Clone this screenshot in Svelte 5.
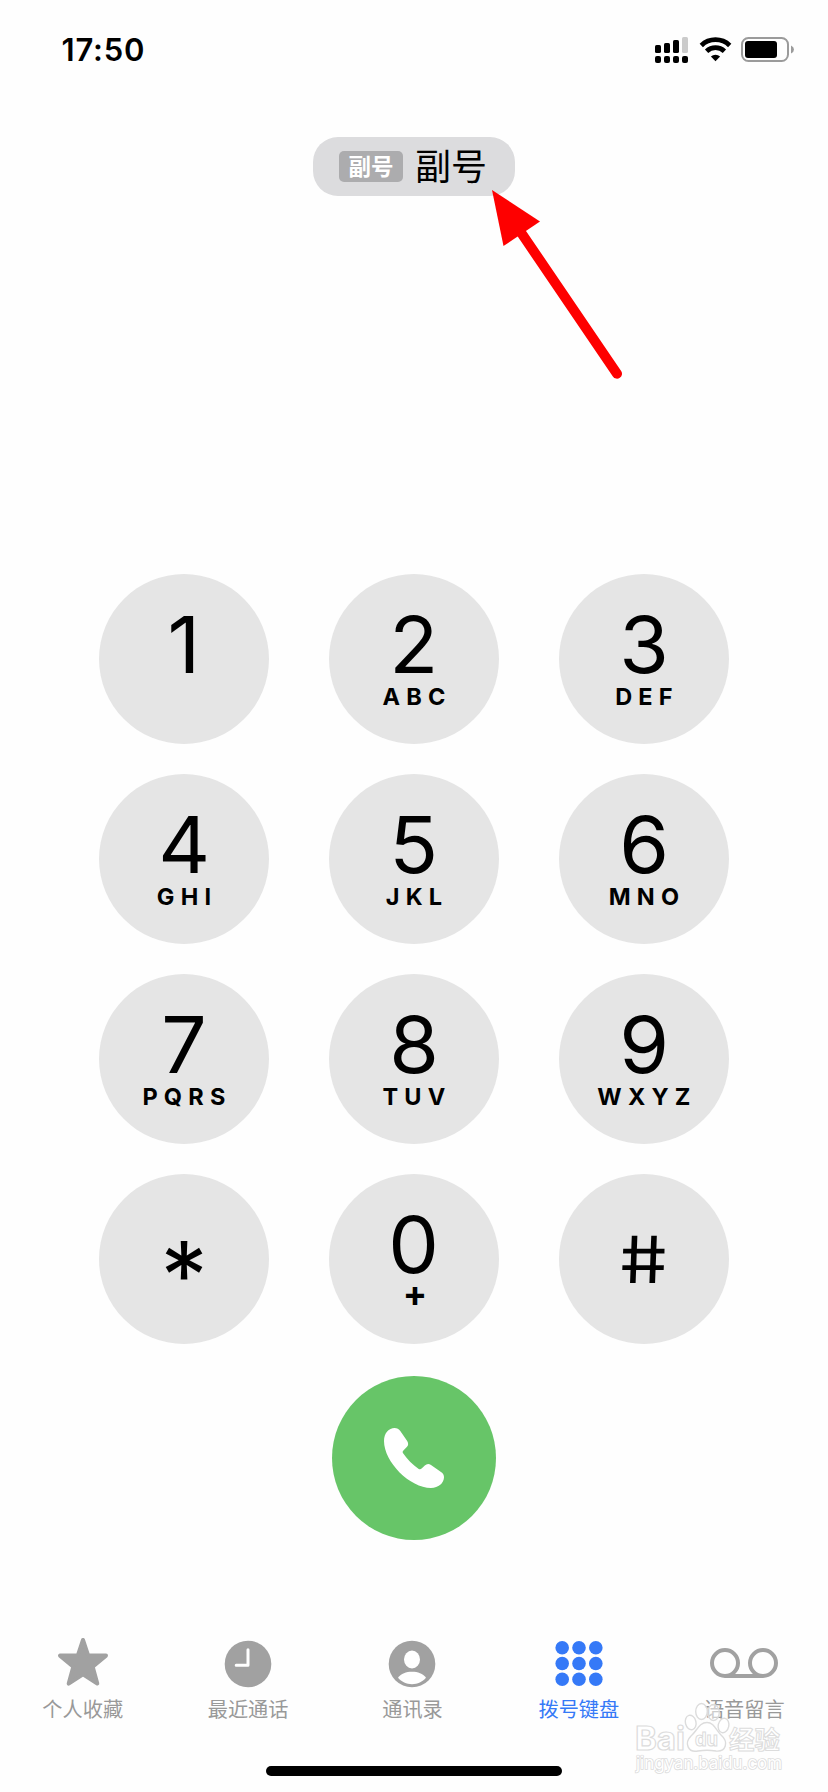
<script>
  const keys = [
    { main: '1', sub: '' },
    { main: '2', sub: 'ABC' },
    { main: '3', sub: 'DEF' },
    { main: '4', sub: 'GHI' },
    { main: '5', sub: 'JKL' },
    { main: '6', sub: 'MNO' },
    { main: '7', sub: 'PQRS' },
    { main: '8', sub: 'TUV' },
    { main: '9', sub: 'WXYZ' },
    { main: '*', sub: '', kind: 'star' },
    { main: '0', sub: '+', kind: 'zero' },
    { main: '#', sub: '', kind: 'hash' }
  ];
  const tabs = [
    { id: 'fav', label: '个人收藏' },
    { id: 'recent', label: '最近通话' },
    { id: 'contacts', label: '通讯录' },
    { id: 'dial', label: '拨号键盘' },
    { id: 'voicemail', label: '语音留言' }
  ];
  const steps = [0, 1, 2];
</script>

<div class="phone">
  <header class="status">
    <span class="time">17:50</span>
    <svg class="indicators" width="144" height="30" viewBox="0 0 144 30">
      <rect x="0" y="10" width="6" height="8" rx="1.6" />
      <rect x="9" y="8" width="6" height="10" rx="1.6" />
      <rect x="18" y="5" width="6" height="13" rx="1.6" />
      <rect x="27" y="2" width="6" height="16" rx="1.6" fill="#cbcbcb" />
      {#each [0, 9, 18, 27] as x}
        <rect {x} y="21" width="6" height="7" rx="2" />
      {/each}
      <g fill="none" stroke="#000" stroke-width="4.8">
        <path d="M46.3 10.4 A20.5 20.5 0 0 1 74.7 10.4" />
        <path d="M51.6 16.2 A13 13 0 0 1 69.4 16.2" />
      </g>
      <path d="M60.5 26.2 L55.9 21.6 A6.6 6.6 0 0 1 65.1 21.6 Z" />
      <rect x="87" y="3" width="46" height="23" rx="6.4" fill="none" stroke="#9b9b9b" stroke-width="2" />
      <rect x="90" y="6" width="32" height="17" rx="3" />
      <path d="M136 10.5 Q139 12 139 14.5 Q139 17 136 18.5 Z" fill="#9b9b9b" />
    </svg>
  </header>

  <div class="line-picker">
    <div class="pill"><span class="badge">副号</span><span class="name">副号</span></div>
    <svg class="arrow" width="140" height="200" viewBox="0 0 140 200">
      <path d="M29 42.5 L125 183.7" stroke="#fe0000" stroke-width="10" stroke-linecap="round" />
      <path d="M0 0 L48 31.5 L11.5 56 Z" fill="#fe0000" />
    </svg>
  </div>

  <main class="keypad">
    {#each keys as key}
      <div class="key {key.kind ?? ''}">
        <span class="main">{key.main}</span>
        {#if key.sub}<span class="sub">{key.sub}</span>{/if}
      </div>
    {/each}
  </main>

  <div class="call">
    <svg width="60" height="60" viewBox="0 0 60 60">
      <path fill="#fff" d="M0 13 C0 5 5 0 10.5 0 C13 0 15 1.2 16.3 3.1 L23.2 13 C24.6 15.2 24.5 17.3 22.8 19 L19.4 22.4 C18.5 23.3 18.4 24.2 19.1 25.3 C23 31.2 28.6 36.7 34.7 40.9 C35.8 41.6 36.6 41.5 37.6 40.6 L40.8 37.6 C42.7 35.7 44.8 35.5 47 37 L57 44 C59 45.4 60 47 60 49.3 C60 55 54.5 60 47 60 C26 60 0 34 0 13 Z" />
    </svg>
  </div>

  <nav class="tabs">
    {#each tabs as tab}
      <div class="tab {tab.id}">
        <div class="icon">
          {#if tab.id === 'fav'}
            <svg width="52" height="54" viewBox="0 0 52 54">
              <path d="M26 3 L31.2 18.6 L49 18.6 L35.7 29.8 L40.3 46.6 L26 37.4 L11.7 46.6 L16.3 29.8 L3 18.6 L20.8 18.6 Z" fill="#a1a1a1" stroke="#a1a1a1" stroke-width="4" stroke-linejoin="round" />
            </svg>
          {:else if tab.id === 'recent'}
            <svg width="48" height="48" viewBox="0 0 48 48">
              <circle cx="24" cy="24" r="23.3" fill="#a1a1a1" />
              <path d="M24 9.8 V25.2 H12.2" fill="none" stroke="#fff" stroke-width="3" stroke-linecap="round" stroke-linejoin="round" />
            </svg>
          {:else if tab.id === 'contacts'}
            <svg width="48" height="48" viewBox="0 0 48 48">
              <circle cx="24" cy="24" r="23.3" fill="#a1a1a1" />
              <ellipse cx="24" cy="19.5" rx="8" ry="8.9" fill="#fff" />
              <path d="M10 37.8 C13.2 33.6 18 31.8 24 31.8 C30 31.8 34.8 33.6 38 37.8 C34.4 41.9 29.6 44.2 24 44.2 C18.4 44.2 13.6 41.9 10 37.8 Z" fill="#fff" />
            </svg>
          {:else if tab.id === 'dial'}
            <svg width="48" height="48" viewBox="0 0 48 48">
              {#each steps as row}
                {#each steps as col}
                  <circle cx={7.2 + col * 16.8} cy={7.7 + row * 15.8} r="6.8" fill="#3579f7" />
                {/each}
              {/each}
            </svg>
          {:else}
            <svg width="70" height="48" viewBox="0 0 70 48">
              <g fill="none" stroke="#a1a1a1" stroke-width="4">
                <circle cx="16" cy="23" r="13" />
                <circle cx="54" cy="23" r="13" />
                <path d="M16 36 H54" />
              </g>
            </svg>
          {/if}
        </div>
        <span class="label">{tab.label}</span>
      </div>
    {/each}
  </nav>

  <svg class="watermark" width="160" height="86" viewBox="0 0 160 86">
    <g fill="#fff" stroke="#dcdcdc" stroke-width="1.4">
      <ellipse cx="20.7" cy="30.5" rx="5.3" ry="7.3" transform="rotate(-14 20.7 30.5)" />
      <ellipse cx="31.5" cy="19.5" rx="5.8" ry="8" fill-opacity=".8" />
      <ellipse cx="43.5" cy="20.5" rx="5.8" ry="8" fill-opacity=".5" />
      <ellipse cx="53.5" cy="33.5" rx="5.3" ry="7.3" transform="rotate(12 53.5 33.5)" />
      <path d="M37 30.5 C44 30.5 46 38 51 43 C59 50 56 60 46 59 C40 58 34 58 28 59 C18 61 14 51 21 44 C27 39 29 30.5 37 30.5 Z" />
    </g>
    <g fill="#fff" stroke="#dcdcdc" font-family="Inter, sans-serif" font-weight="700">
      <text x="-35" y="57.5" font-size="33" stroke-width="1.2" textLength="50" lengthAdjust="spacingAndGlyphs">Bai</text>
      <text x="25" y="54" font-size="19" stroke-width="1" textLength="23" lengthAdjust="spacingAndGlyphs">du</text>
      <text x="59" y="57" font-size="25.5" stroke-width="1" textLength="51" font-family="'Noto Sans CJK SC', sans-serif" font-weight="700">经验</text>
      <text x="-34" y="77" font-size="17" stroke-width="1.6" paint-order="stroke" font-weight="400" textLength="146" lengthAdjust="spacingAndGlyphs">jingyan.baidu.com</text>
    </g>
  </svg>

  <div class="home-bar"></div>
</div>

<style>
  :global(body) {
    margin: 0;
    background: #fff;
  }
  .phone {
    position: relative;
    box-sizing: border-box;
    display: flex;
    flex-direction: column;
    align-items: center;
    width: 828px;
    height: 1792px;
    overflow: hidden;
    background: #fefefe;
    color: #000;
    font-family: Inter, 'Noto Sans CJK SC', sans-serif;
  }
  .status {
    box-sizing: border-box;
    display: flex;
    justify-content: space-between;
    align-items: flex-start;
    width: 828px;
    height: 137px;
    padding: 35px 29px 0 61.5px;
  }
  .time {
    margin-top: -1px;
    font-size: 31px;
    line-height: 31px;
    font-weight: 600;
    letter-spacing: 0.8px;
  }
  .line-picker {
    position: relative;
    height: 437px;
  }
  .pill {
    box-sizing: border-box;
    display: flex;
    align-items: center;
    width: 202px;
    height: 59px;
    padding-left: 26px;
    gap: 12px;
    border-radius: 25px;
    background: #dcdcde;
    font-family: 'Noto Sans CJK SC', sans-serif;
  }
  .badge {
    width: 64px;
    height: 31px;
    border-radius: 5px;
    background: #acacae;
    color: #fff;
    font-size: 22.5px;
    line-height: 29px;
    font-weight: 700;
    text-align: center;
  }
  .name {
    font-size: 36px;
    line-height: 54px;
    margin-bottom: 5px;
  }
  .arrow {
    position: absolute;
    left: 179px;
    top: 53px;
    overflow: visible;
  }
  .keypad {
    display: grid;
    grid-template-columns: repeat(3, 170px);
    grid-auto-rows: 170px;
    gap: 30px 60px;
  }
  .key {
    box-sizing: border-box;
    display: flex;
    flex-direction: column;
    align-items: center;
    padding-top: 32px;
    border-radius: 50%;
    background: #e5e5e5;
  }
  .main {
    font-size: 78px;
    line-height: 78px;
    transform: scaleX(1.03);
  }
  .sub {
    margin-top: 1px;
    font-size: 23.5px;
    line-height: 24px;
    font-weight: 700;
    letter-spacing: 6.2px;
    padding-left: 6px;
  }
  .star {
    padding-top: 62px;
  }
  .star .main {
    font-size: 94px;
    font-weight: 400;
    transform: none;
  }
  .hash .main {
    font-size: 65px;
    line-height: 107px;
    transform: scaleX(1.17) skewX(7.5deg);
  }
  .zero .sub {
    margin-top: 0;
    font-size: 36px;
    line-height: 19px;
    font-weight: 700;
    letter-spacing: 0;
    padding-left: 2px;
  }
  .call {
    display: flex;
    align-items: center;
    justify-content: center;
    width: 164px;
    height: 164px;
    margin-top: 32px;
    border-radius: 50%;
    background: #67c568;
  }
  .tabs {
    display: grid;
    grid-template-columns: repeat(5, 165.4px);
    align-self: flex-start;
    margin-top: 98px;
  }
  .tab {
    display: flex;
    flex-direction: column;
    align-items: center;
    color: #999;
  }
  .contacts {
    margin-left: -2px;
  }
  .dial {
    color: #3579f7;
  }
  .icon {
    display: flex;
    align-items: center;
    height: 52px;
  }
  .label {
    margin-top: 4px;
    font-family: 'Noto Sans CJK SC', sans-serif;
    font-size: 20.2px;
    line-height: 29px;
  }
  .watermark {
    position: absolute;
    left: 670px;
    top: 1692px;
    overflow: visible;
  }
  .home-bar {
    width: 296px;
    height: 10px;
    margin-top: 43px;
    border-radius: 5px;
    background: #000;
  }
</style>
